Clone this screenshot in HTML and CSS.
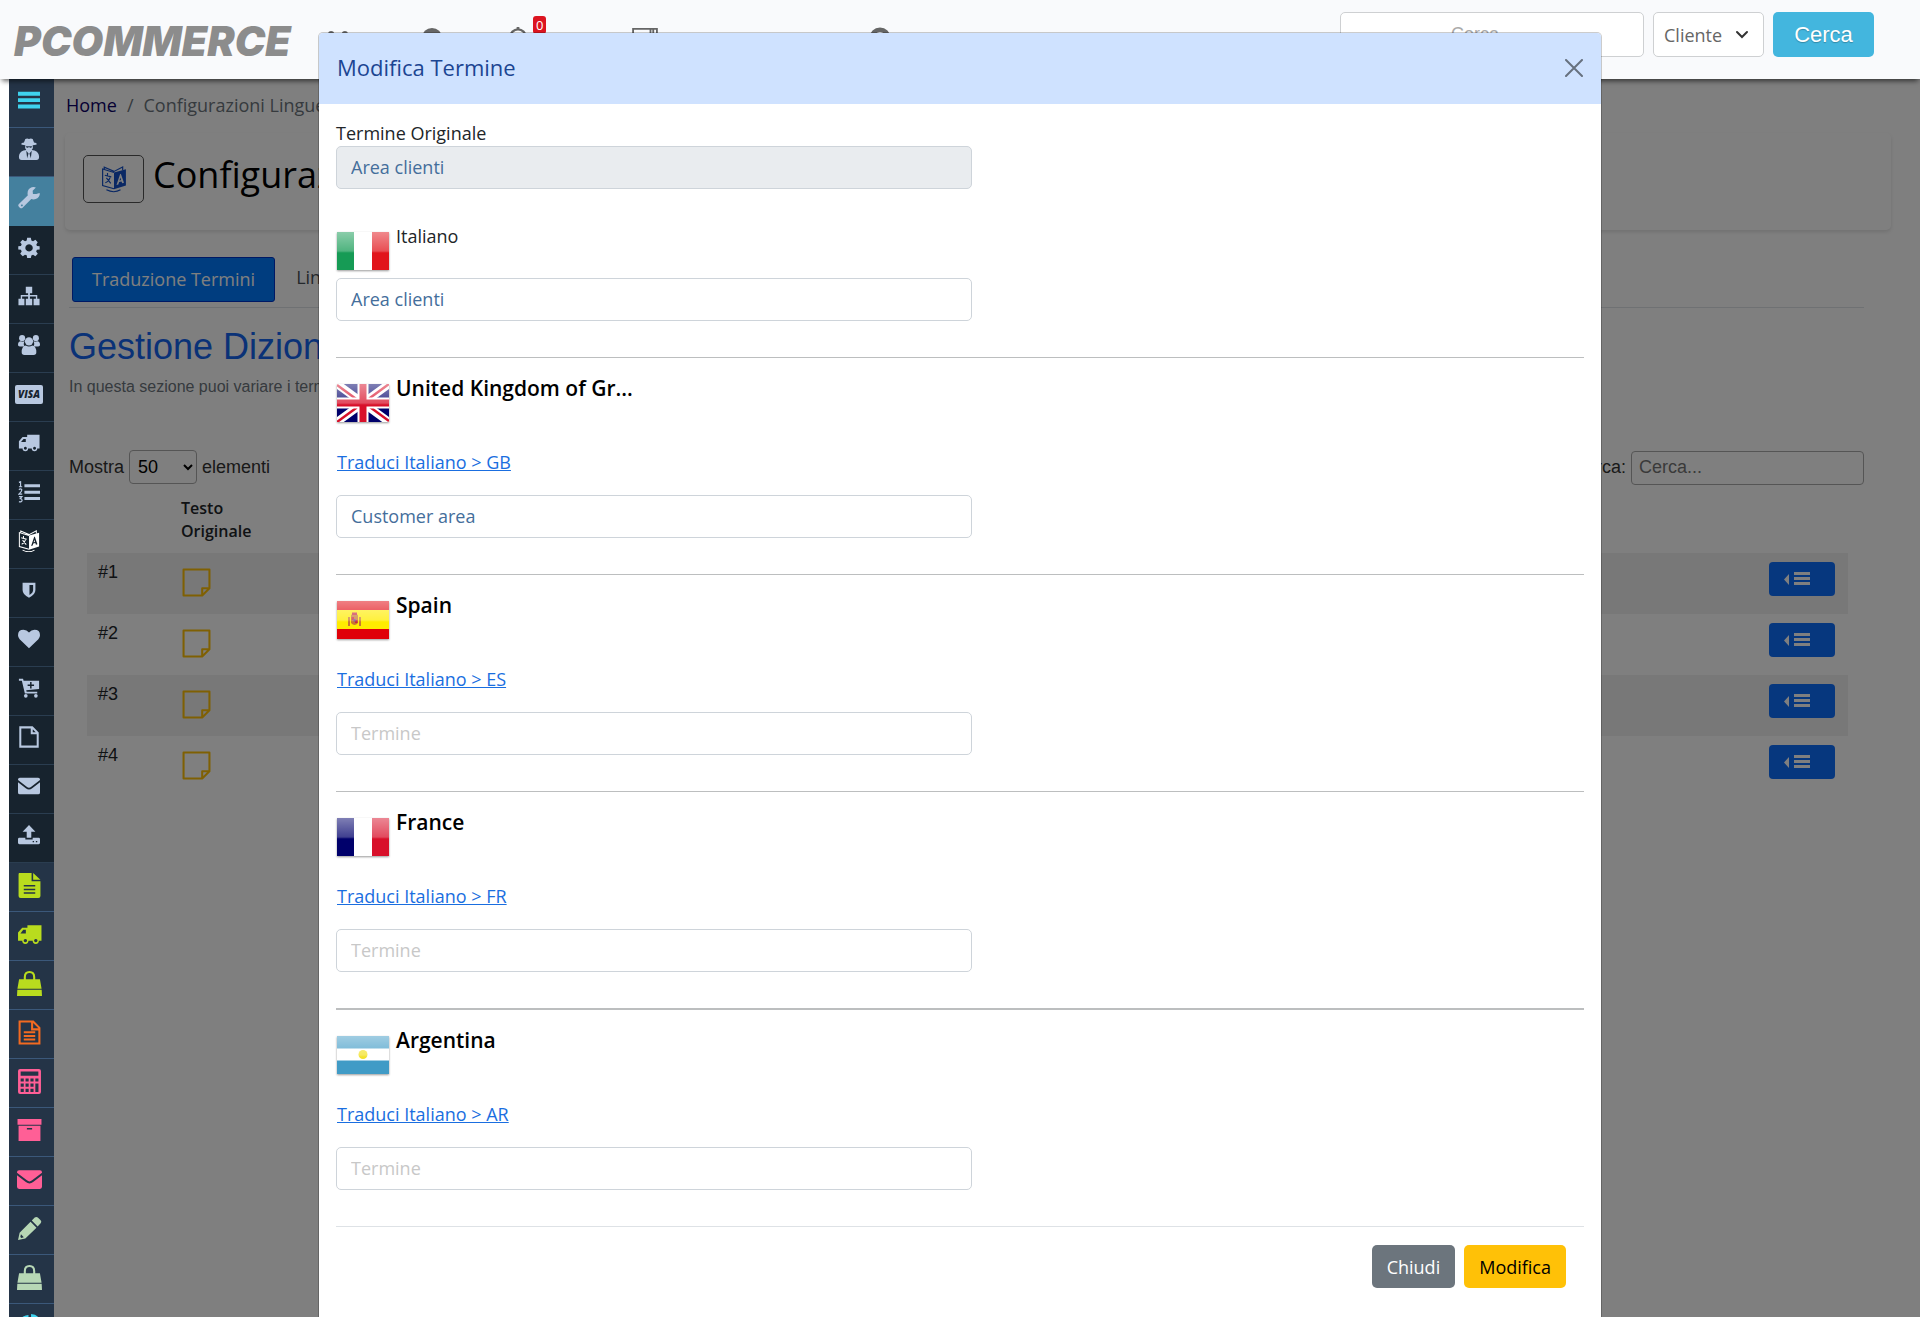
FILE: index.html
```html
<!DOCTYPE html>
<html lang="it">
<head>
  <meta charset="UTF-8">
  <meta name="viewport" content="width=device-width, initial-scale=1.0">
  <title>Configurazioni Lingue</title>
  <link rel="stylesheet" href="styles.css">
</head>
<body>

<svg class="sprite" aria-hidden="true">
  <symbol id="i-bars" viewBox="0 0 24 24"><path d="M0 3h24v4.300H0zM0 10h24v4.300H0zM0 17h24v4.300H0z"/></symbol>
  <symbol id="i-spy" viewBox="0 0 24 24"><path d="M8 1q2-1 4 0 2-1 4 0l1.500 4q3 .5 3 1.500T16 8q1 3-1 5l3 .5q5 2 5 7 0 3.500-3 3.500H4q-3 0-3-3.500 0-5 5-7l3-.5Q7 11 8 8q-4.500-.5-4.500-1.500t3-1.500zM8.500 9l1 1.500h1.500l1-1 1 1h1.500l1-1.500zM9 14l1 8 1.500-5zM15 14l-1 8-1.500-5z" fill-rule="evenodd"/></symbol>
  <symbol id="i-wrench" viewBox="0 0 24 24"><path d="M23.500 6.500q.5 1 0 2.500-1.500 4.500-6.500 4.500-1.500 0-2.500-.5L5 22.500q-1.500 1.500-3 0L1 21.500q-1.500-1.500 0-3L10.800 9q-.4-1-.4-2 0-5 4.600-6.600 2.500-.8 4.500.2L16 4l.3 3.500 3.600.2zM4.200 19a1 1 0 1 0 .1 0z" fill-rule="evenodd"/></symbol>
  <symbol id="i-gear" viewBox="0 0 24 24"><path d="M10 2h4l.6 3 1.800.8L19 4l2.500 2.800L20 9.200l.6 1.800 3 .3v3.400l-3 .4-.8 1.800 1.800 2.500-2.700 2.700-2.500-1.700-1.800.8-.6 2.800h-4l-.5-2.900-1.900-.7-2.400 1.700-2.800-2.700L4 16.900l-.8-1.800-2.900-.4v-3.400l2.900-.3L4 9.100 2.400 6.800 5 4l2.700 1.800L9.500 5zM12 9a4 4 0 1 0 .1 0z" fill-rule="evenodd"/></symbol>
  <symbol id="i-tree" viewBox="0 0 24 24"><path d="M8.500 2h7v7H13v2h8v4h2.500v7H17v-7h2.500v-2.500H13V15h2.500v7h-7v-7H11v-2.500H4.500V15H7v7H.5v-7H3v-4h8V9H8.500z"/></symbol>
  <symbol id="i-users" viewBox="0 0 24 24"><circle cx="4.500" cy="4.500" r="3.300"/><circle cx="19.500" cy="4.500" r="3.300"/><path d="M0 12q0-4 3-4 2 1 4 0-1.500 3 0 5.500H2Q0 13.500 0 12zM24 12q0-4-3-4-2 1-4 0 1.500 3 0 5.500h5q2 0 2-1.500z"/><circle cx="12" cy="8" r="4.500"/><path d="M4 20q0-7 4.500-7.500 3.500 2 7 0Q20 13 20 20q0 3-3 3H7q-3 0-3-3z"/></symbol>
  <symbol id="i-truck" viewBox="0 0 24 24"><path d="M10 3h13.500v15H21a3 3 0 0 1-6 0h-4a3 3 0 0 1-6 0H1v-8l4-4.500h5zM8.500 7.500H6L3.300 11h5.200zM8 16.200a1.600 1.600 0 1 0 .1 0zM18 16.200a1.600 1.600 0 1 0 .1 0z" fill-rule="evenodd"/></symbol>
  <symbol id="i-list" viewBox="0 0 24 24"><path d="M7 3.500h17v3.300H7zM7 10.500h17v3.300H7zM7 17.500h17v3.300H7z"/><path d="M1 1.500 2.800.8V6M1 6.300h3.600M1 9.500q1.500-1.500 3-.3.800 1.800-3 5.100h3.600M1 17h3.300L2.500 19.200q2 .2 2 1.800-.3 2.300-3.500 1.500" fill="none" stroke="currentColor" stroke-width="1.300"/></symbol>
  <symbol id="i-lang" viewBox="0 0 24 24"><path d="M12 6 23 3v15l-11 3.500zM17.600 7.500l-3.300 10 1.700-.5.700-2.200 2.200-.6.700 1.800 1.600-.5-2.900-8.400zM17.800 10.500l.8 2.500-1.500.4z" fill-rule="evenodd"/><path d="M12 6 1.500 2.800V18L12 21M3 3V1l9 4 8-4v3M5 22q7 3.500 13 0M3.500 8.500l6 1.500M6 6.500v2.500M8.500 10q-1 4-4.500 5.500M5 11l4 5" fill="none" stroke="currentColor" stroke-width="1.100"/></symbol>
  <symbol id="i-shield" viewBox="0 0 24 24"><path d="M5 4h14v8q0 5-7 8.500Q5 17 5 12zM12.500 6.500v11q4-2.500 4-5.500V6.500z" fill-rule="evenodd"/></symbol>
  <symbol id="i-heart" viewBox="0 0 24 24"><path d="M12 22 1.800 12.200Q0 10 0 7.800 0 2 6 2q3.500 0 6 3 2.500-3 6-3 6 0 6 5.800 0 2.200-1.800 4.400z"/></symbol>
  <symbol id="i-cart" viewBox="0 0 24 24"><path d="M1 2h4.500l.6 2H23v9L9 14.500l.4 1.500H21v2H7.500L4.200 4H1zM13.200 5.500v2.700H10.500v1.600h2.700v2.700h1.600V9.800h2.700V8.200h-2.700V5.500z" fill-rule="evenodd"/><circle cx="8.500" cy="20.500" r="2"/><circle cx="19.500" cy="20.500" r="2"/></symbol>
  <symbol id="i-file" viewBox="0 0 24 24"><path d="M2.500 1.500h13l6 6v15h-19zM15 1.500V8h6.500" fill="none" stroke="currentColor" stroke-width="2.200"/></symbol>
  <symbol id="i-mail" viewBox="0 0 24 24"><path d="M2 3h20q2 0 2 2v.5L14.500 12.800Q12 15 9.500 12.800L0 5.500V5q0-2 2-2zM0 8l8.500 6.500q3.500 2.700 7 0L24 8v11q0 2-2 2H2q-2 0-2-2z"/></symbol>
  <symbol id="i-upload" viewBox="0 0 24 24"><path d="M12 1l7 7.500h-4.500V15h-5V8.500H5zM1.500 15H8v2h8v-2h6.500q1.500 0 1.500 1.500v4q0 1.500-1.500 1.500h-21Q0 22 0 20.500v-4Q0 15 1.500 15zM16 18.500V20h1.500v-1.500zM19.500 18.500V20H21v-1.500z" fill-rule="evenodd"/></symbol>
  <symbol id="i-filetext" viewBox="0 0 24 24"><path d="M2 0h12v8h8.500v14q0 2-2 2h-17q-2 0-2-2V2q0-2 .5-2zM15.500 0l7 6.500h-7zM6.500 11.500V13h11v-1.500zM6.500 15v1.500h11V15zM6.500 18.500V20h11v-1.500z" fill-rule="evenodd"/></symbol>
  <symbol id="i-fileline" viewBox="0 0 24 24"><path d="M2.500 1.500h13l6 6v15h-19zM14.500 1.500V9h7M6.500 11.800h11M6.500 15.300h11M6.500 18.800h11" fill="none" stroke="currentColor" stroke-width="2"/></symbol>
  <symbol id="i-bag" viewBox="0 0 24 24"><path d="M2 8h20l1.600 9H.4zM.3 18h23.400l.3 6H0z"/><path d="M7.500 11V6q0-5 4.500-5t4.500 5v5" fill="none" stroke="currentColor" stroke-width="2"/></symbol>
  <symbol id="i-calc" viewBox="0 0 24 24"><path d="M3 0h18q2 0 2 2v20q0 2-2 2H3q-2 0-2-2V2q0-2 2-2zM3.500 2.500v4h17v-4zM3.500 9v3h3V9zM8.200 9v3h3V9zM12.900 9v3h3V9zM17.600 9v3h3V9zM3.500 14v3h3v-3zM8.200 14v3h3v-3zM12.900 14v3h3v-3zM17.600 14v8h3v-8zM3.500 19v3h3v-3zM8.200 19v3h3v-3zM12.900 19v3h3v-3z" fill-rule="evenodd"/></symbol>
  <symbol id="i-box" viewBox="0 0 24 24"><path d="M.5 1h23v5.500H.5zM1.500 7.500h21V22h-21zM9.500 9.500V11h5V9.500z" fill-rule="evenodd"/></symbol>
  <symbol id="i-pencil" viewBox="0 0 24 24"><path d="M1 23l1.500-7L13 5.500l5.700 5.700L8 21.700zM14.200 4.300 17 1.500q1.500-1.300 3 0L22.700 4q1.300 1.500 0 3l-2.900 3zM3.800 17.500l-.6 2.700 1 .9 2.300-.6z" fill-rule="evenodd"/></symbol>
  <symbol id="i-pie" viewBox="0 0 24 24"><path d="M11 1v11l8 8A11 11 0 1 1 11 1zM13.500 0A11 11 0 0 1 24 10.500H13.500z"/></symbol>
  <symbol id="i-note" viewBox="0 0 28 28"><path d="M1.500 1.500h25v18l-7 7h-18zM19.500 26.500v-7h7" fill="none" stroke="currentColor" stroke-width="2" stroke-linejoin="round"/></symbol>
  <symbol id="i-menuleft" viewBox="0 0 28 16"><path d="M6 3v11L1 8.500zM11 1h16v3H11zM11 6h16v3H11zM11 11h16v3H11z"/></symbol>
  <symbol id="i-x" viewBox="0 0 18 18"><path d="M1 1l16 16M17 1 1 17" fill="none" stroke="currentColor" stroke-width="2" stroke-linecap="round"/></symbol>
  <symbol id="i-globe" viewBox="0 0 24 24"><circle cx="12" cy="12" r="11"/></symbol>
  <symbol id="i-clock" viewBox="0 0 24 24"><circle cx="12" cy="11" r="8.500" fill="none" stroke="currentColor" stroke-width="2.500"/><path d="M10.500 0h3v3h-3z"/></symbol>
  <symbol id="i-news" viewBox="0 0 28 24"><path d="M1 2h26v20H1zM20 2v20M23 2v20M1 8h18" fill="none" stroke="currentColor" stroke-width="2"/></symbol>
  <symbol id="i-help" viewBox="0 0 24 24"><circle cx="12" cy="12" r="9" fill="none" stroke="currentColor" stroke-width="5"/></symbol>
  <linearGradient id="gloss" x1="0" y1="0" x2="0" y2="1">
    <stop offset="0" stop-color="#fff" stop-opacity=".5"/>
    <stop offset=".5" stop-color="#fff" stop-opacity=".25"/>
    <stop offset=".55" stop-color="#fff" stop-opacity="0"/>
  </linearGradient>
</svg>

<header class="topbar">
  <a class="logo" href="#">PCOMMERCE</a>
  <nav class="topnav" aria-label="Menu principale">
    <a href="#" aria-label="Clienti" class="clients"><svg class="nav-icon"><use href="#i-users"/></svg></a>
    <a href="#" aria-label="Sito"><svg class="nav-icon"><use href="#i-globe"/></svg></a>
    <a href="#" aria-label="Notifiche"><svg class="nav-icon"><use href="#i-clock"/></svg><span class="badge">0</span></a>
    <a href="#" aria-label="Novità" class="news"><svg class="nav-icon nav-icon-wide"><use href="#i-news"/></svg></a>
    <a href="#" aria-label="Aiuto" class="help"><svg class="nav-icon"><use href="#i-help"/></svg></a>
  </nav>
  <form class="top-search">
    <input type="text" class="top-input" placeholder="Cerca..." aria-label="Cerca">
    <select class="top-select" aria-label="Tipo di ricerca">
      <option>Cliente</option>
    </select>
    <button type="button" class="top-btn">Cerca</button>
  </form>
</header>

<div class="layout">
  <nav class="sidebar" aria-label="Menu laterale">
    <a href="#" class="side-link cyan" aria-label="Menu"><svg><use href="#i-bars"/></svg></a>
    <a href="#" class="side-link" aria-label="Agente"><svg><use href="#i-spy"/></svg></a>
    <a href="#" class="side-link active" aria-label="Configurazione"><svg><use href="#i-wrench"/></svg></a>
    <a href="#" class="side-link sub" aria-label="Impostazioni"><svg><use href="#i-gear"/></svg></a>
    <a href="#" class="side-link sub" aria-label="Categorie"><svg><use href="#i-tree"/></svg></a>
    <a href="#" class="side-link sub" aria-label="Utenti"><svg><use href="#i-users"/></svg></a>
    <a href="#" class="side-link sub" aria-label="Pagamenti"><span class="visa">VISA</span></a>
    <a href="#" class="side-link sub" aria-label="Spedizioni"><svg><use href="#i-truck"/></svg></a>
    <a href="#" class="side-link sub" aria-label="Numerazione"><svg><use href="#i-list"/></svg></a>
    <a href="#" class="side-link sub white" aria-label="Lingue"><svg><use href="#i-lang"/></svg></a>
    <a href="#" class="side-link sub" aria-label="Sicurezza"><svg><use href="#i-shield"/></svg></a>
    <a href="#" class="side-link sub" aria-label="Preferiti"><svg><use href="#i-heart"/></svg></a>
    <a href="#" class="side-link sub" aria-label="Carrello"><svg><use href="#i-cart"/></svg></a>
    <a href="#" class="side-link sub" aria-label="Pagine"><svg><use href="#i-file"/></svg></a>
    <a href="#" class="side-link sub" aria-label="Email"><svg><use href="#i-mail"/></svg></a>
    <a href="#" class="side-link sub" aria-label="Carica"><svg><use href="#i-upload"/></svg></a>
    <a href="#" class="side-link big lime" aria-label="Ordini"><svg><use href="#i-filetext"/></svg></a>
    <a href="#" class="side-link big lime" aria-label="Consegne"><svg><use href="#i-truck"/></svg></a>
    <a href="#" class="side-link big lime" aria-label="Vendite"><svg><use href="#i-bag"/></svg></a>
    <a href="#" class="side-link big orange" aria-label="Documenti"><svg><use href="#i-fileline"/></svg></a>
    <a href="#" class="side-link big pink" aria-label="Calcolatrice"><svg><use href="#i-calc"/></svg></a>
    <a href="#" class="side-link big pink" aria-label="Archivio"><svg><use href="#i-box"/></svg></a>
    <a href="#" class="side-link big pink" aria-label="Messaggi"><svg><use href="#i-mail"/></svg></a>
    <a href="#" class="side-link big sage" aria-label="Modifica"><svg><use href="#i-pencil"/></svg></a>
    <a href="#" class="side-link big sage" aria-label="Prodotti"><svg><use href="#i-bag"/></svg></a>
    <a href="#" class="side-link big cyan" aria-label="Statistiche"><svg><use href="#i-pie"/></svg></a>
  </nav>

  <main class="main">
    <nav class="breadcrumb" aria-label="breadcrumb">
      <a href="#">Home</a><span>/</span><span>Configurazioni Lingue</span>
    </nav>

    <div class="page-title">
      <span class="title-icon"><svg><use href="#i-lang"/></svg></span>
      <h1>Configurazioni Lingue</h1>
    </div>

    <div class="content">
      <div class="tabs">
        <a href="#" class="tab tab-active">Traduzione Termini</a>
        <a href="#" class="tab">Lingue</a>
      </div>

      <h2>Gestione Dizionario</h2>
      <p class="intro">In questa sezione puoi variare i termini</p>

      <div class="table-tools">
        <label>Mostra
          <select class="length-select">
            <option>50</option>
          </select>
          elementi</label>
        <label>Cerca:
          <input type="search" class="filter-input" placeholder="Cerca..."></label>
      </div>

      <table class="terms">
        <thead>
          <tr><th class="col-id"></th><th class="col-text">Testo Originale</th><th></th></tr>
        </thead>
        <tbody>
          <tr>
            <td>#1</td>
            <td><svg class="note"><use href="#i-note"/></svg></td>
            <td class="col-action"><button type="button" class="row-btn" aria-label="Azioni #1"><svg><use href="#i-menuleft"/></svg></button></td>
          </tr>
          <tr>
            <td>#2</td>
            <td><svg class="note"><use href="#i-note"/></svg></td>
            <td class="col-action"><button type="button" class="row-btn" aria-label="Azioni #2"><svg><use href="#i-menuleft"/></svg></button></td>
          </tr>
          <tr>
            <td>#3</td>
            <td><svg class="note"><use href="#i-note"/></svg></td>
            <td class="col-action"><button type="button" class="row-btn" aria-label="Azioni #3"><svg><use href="#i-menuleft"/></svg></button></td>
          </tr>
          <tr>
            <td>#4</td>
            <td><svg class="note"><use href="#i-note"/></svg></td>
            <td class="col-action"><button type="button" class="row-btn" aria-label="Azioni #4"><svg><use href="#i-menuleft"/></svg></button></td>
          </tr>
        </tbody>
      </table>
    </div>
    <div class="backdrop"></div>
  </main>
</div>

<div class="modal" role="dialog" aria-modal="true" aria-labelledby="modalTitle">
  <div class="modal-header">
    <h5 id="modalTitle">Modifica Termine</h5>
    <button type="button" class="btn-close" aria-label="Chiudi finestra"><svg><use href="#i-x"/></svg></button>
  </div>
  <form class="modal-body">
    <label class="original-label" for="originale">Termine Originale</label>
    <input type="text" id="originale" class="field" value="Area clienti" disabled>

    <div class="lang lang-first">
      <div class="lang-head">
        <svg class="flag" viewBox="0 0 52 38"><path fill="#fff" d="M0 0h52v38H0z"/><path fill="#169b55" d="M0 0h17v38H0z"/><path fill="#e1141b" d="M35 0h17v38H35z"/><path fill="url(#gloss)" d="M0 0h52v38H0z"/></svg>
        <label for="it">Italiano</label>
      </div>
      <input type="text" id="it" class="field" value="Area clienti">
    </div>

    <div class="lang">
      <div class="lang-head">
        <svg class="flag" viewBox="0 0 52 38"><path fill="#00006b" d="M0 0h52v38H0z"/><path stroke="#fff" stroke-width="8" d="M0 0l52 38M52 0 0 38"/><path stroke="#d8102a" stroke-width="2.500" d="M0 1l26 19M52 0 26 19M52 37 26 18M0 38l26-19"/><path stroke="#fff" stroke-width="11" d="M26 0v38M0 19h52"/><path stroke="#d8102a" stroke-width="7" d="M26 0v38M0 19h52"/><path fill="url(#gloss)" d="M0 0h52v38H0z"/></svg>
        <label for="gb">United Kingdom of Gr...</label>
      </div>
      <a href="#" class="translate">Traduci Italiano &gt; GB</a>
      <input type="text" id="gb" class="field" placeholder="Termine" value="Customer area">
    </div>

    <div class="lang">
      <div class="lang-head">
        <svg class="flag" viewBox="0 0 52 38"><path fill="#e00008" d="M0 0h52v38H0z"/><path fill="#ffec00" d="M0 9h52v19H0z"/><path fill="#c87832" d="M11 16h2v9h-2zM22 16h2v9h-2zM14 14q3.500-3 7 0v8q-3.500 4-7 0z"/><path fill="#c8283c" d="M14.500 16H17v3h-2.500zM18 19h2.500v3H18zM15 11.500h5V14h-5z"/><path fill="#7d5096" d="M16.500 18h2v2.500h-2z"/><path fill="url(#gloss)" d="M0 0h52v38H0z"/></svg>
        <label for="es">Spain</label>
      </div>
      <a href="#" class="translate">Traduci Italiano &gt; ES</a>
      <input type="text" id="es" class="field" placeholder="Termine">
    </div>

    <div class="lang">
      <div class="lang-head">
        <svg class="flag" viewBox="0 0 52 38"><path fill="#fff" d="M0 0h52v38H0z"/><path fill="#00006b" d="M0 0h17v38H0z"/><path fill="#d8102a" d="M35 0h17v38H35z"/><path fill="url(#gloss)" d="M0 0h52v38H0z"/></svg>
        <label for="fr">France</label>
      </div>
      <a href="#" class="translate">Traduci Italiano &gt; FR</a>
      <input type="text" id="fr" class="field" placeholder="Termine">
    </div>

    <div class="lang lang-last">
      <div class="lang-head">
        <svg class="flag" viewBox="0 0 52 38"><path fill="#409bc6" d="M0 0h52v38H0z"/><path fill="#fff" d="M0 12.500h52v12H0z"/><circle cx="26" cy="18.500" r="4.500" fill="#f3e22c"/><path fill="url(#gloss)" d="M0 0h52v38H0z"/></svg>
        <label for="ar">Argentina</label>
      </div>
      <a href="#" class="translate">Traduci Italiano &gt; AR</a>
      <input type="text" id="ar" class="field" placeholder="Termine">
    </div>

    <div class="modal-footer">
      <button type="button" class="btn btn-secondary">Chiudi</button>
      <button type="button" class="btn btn-warning">Modifica</button>
    </div>
  </form>
</div>

</body>
</html>
```

FILE: styles.css
```css
* {
  box-sizing: border-box;
}

html, body {
  height: 100%;
  overflow: hidden;
}

body {
  margin: 0;
  background-color: #fff;
  color: #212529;
  font-family: "Open Sans", sans-serif;
  font-size: 18px;
  line-height: 27px;
  position: relative;
}

h1, h2, h5, p {
  margin: 0;
  font-weight: 400;
}

a {
  text-decoration: none;
}

button, input, select {
  font-family: inherit;
  font-size: inherit;
}

svg {
  fill: currentColor;
}

.sprite {
  position: absolute;
  width: 0;
  height: 0;
}

/* top bar */
.topbar {
  position: relative;
  z-index: 3;
  display: flex;
  align-items: flex-start;
  height: 79px;
  padding: 12px 46px 0 14px;
  background-color: #f9fafc;
  box-shadow: 0 4px 5px -2px rgba(0, 0, 0, .6);
}

.logo {
  width: 284px;
  padding-top: 8px;
  color: #8c8c8c;
  font-family: Inter, sans-serif;
  font-size: 41px;
  font-weight: 900;
  font-style: italic;
  line-height: 42px;
}

.topnav {
  display: flex;
  flex: 1;
  gap: 64px;
  padding: 15px 0 0 29px;
}

.topnav a {
  position: relative;
  color: #666;
}

.topnav .clients {
  padding-top: 3px;
  margin-right: 8px;
}

.topnav .news {
  margin-left: 38px;
}

.topnav .help {
  margin-left: 146px;
}

.nav-icon {
  display: block;
  width: 22px;
  height: 22px;
}

.nav-icon-wide {
  width: 28px;
}

.badge {
  position: absolute;
  top: -11px;
  left: 26px;
  padding: 0 3px;
  border-radius: 3px;
  background-color: #dc1420;
  color: #fff;
  font-size: 13px;
  line-height: 18px;
}

.top-search {
  display: flex;
  gap: 9px;
}

.top-input, .top-select {
  height: 45px;
  border: 1px solid #ced0d2;
  border-radius: 5px;
  background-color: #fff;
}

.top-input {
  width: 304px;
  padding: 0 20px 0 110px;
  font-family: "Liberation Sans", sans-serif;
}

.top-input::placeholder {
  color: #aaa;
}

.top-select {
  width: 111px;
  padding: 0 10px;
  appearance: none;
  background-image: url("data:image/svg+xml,%3Csvg xmlns='http://www.w3.org/2000/svg' viewBox='0 0 14 14'%3E%3Cpath d='M2 4l5 5 5-5' fill='none' stroke='%23333' stroke-width='2' stroke-linecap='round'/%3E%3C/svg%3E");
  background-position: right 14px center;
  background-repeat: no-repeat;
  background-size: 14px 14px;
  color: #666;
}

.top-btn {
  width: 101px;
  height: 45px;
  border: 0;
  border-radius: 5px;
  background-color: #43b6de;
  color: #fff;
  font-family: "Liberation Sans", sans-serif;
  font-size: 22px;
  text-shadow: 0 1px 1px rgba(0, 0, 0, .25);
}

/* side menu */
.layout {
  display: flex;
  padding-left: 9px;
}

.sidebar {
  width: 45px;
  flex-shrink: 0;
  background-color: #243447;
}

.side-link {
  display: flex;
  align-items: center;
  justify-content: center;
  height: 49px;
  padding: 0 5px 6px 0;
  border-bottom: 1px solid #3b587a;
  color: #b8c8e0;
}

.side-link svg {
  width: 22px;
  height: 22px;
}

.side-link.big {
  padding-bottom: 3px;
}

.side-link.big svg {
  width: 25px;
  height: 25px;
}

.visa {
  width: 28px;
  border-radius: 2px;
  background-color: #b8c8e0;
  color: #17232e;
  font-size: 10px;
  font-weight: 800;
  font-style: italic;
  line-height: 19px;
  text-align: center;
}

.side-link.sub {
  border-color: #2a3d50;
  background-color: #17232e;
}

.side-link.active {
  border-color: #44809e;
  background-color: #44809e;
}

.side-link.cyan { color: #3fd2ee; }
.side-link.white { color: #fff; }
.side-link.lime { color: #b9dc1e; }
.side-link.orange { color: #f26a21; }
.side-link.pink { color: #ff5f96; }
.side-link.sage { color: #b7d7b5; }

/* page */
.main {
  position: relative;
  flex: 1;
  padding: 13px 29px 0 11px;
}

.backdrop {
  position: absolute;
  inset: 0;
  background-color: rgba(0, 0, 0, .5);
}

.breadcrumb {
  display: flex;
  gap: 10px;
  padding-left: 1px;
  color: #6c757d;
}

.breadcrumb a {
  color: #0b0066;
}

.page-title {
  display: flex;
  align-items: flex-start;
  gap: 9px;
  height: 97px;
  margin-top: 14px;
  padding: 22px 18px;
  border-radius: 5px;
  box-shadow: 0 2px 4px rgba(0, 0, 0, .12);
}

.title-icon {
  display: flex;
  align-items: center;
  justify-content: center;
  width: 61px;
  height: 48px;
  border: 1px solid #555;
  border-radius: 5px;
  color: #1450c8;
}

.title-icon svg {
  width: 26px;
  height: 28px;
}

h1 {
  color: #000;
  font-size: 36px;
  line-height: 40px;
}

.content {
  padding: 27px 27px 0 4px;
}

.tabs {
  display: flex;
  height: 51px;
  padding-left: 3px;
  border-bottom: 1px solid #dee2e6;
}

.tab {
  height: 45px;
  padding: 6px 20px;
  border: 1px solid transparent;
  border-radius: 3px;
  color: #495057;
}

.tab-active {
  padding: 8px 19px;
  border-color: #0032c8;
  background-color: #007bff;
  color: #fff;
}

h2 {
  margin-top: 18px;
  color: #1464ee;
  font-family: "Liberation Sans", sans-serif;
  font-size: 36px;
  line-height: 42px;
}

.intro {
  margin-top: 7px;
  color: #6c757d;
  font-family: "Liberation Sans", sans-serif;
  font-size: 16px;
  line-height: 24px;
}

.table-tools {
  display: flex;
  justify-content: space-between;
  margin-top: 51px;
  color: #333;
  font-family: "Liberation Sans", sans-serif;
  font-size: 18px;
  line-height: 34px;
}

.length-select, .filter-input {
  height: 34px;
  border: 1px solid #aaa;
  border-radius: 4px;
  background-color: transparent;
}

.length-select {
  width: 68px;
  padding: 0 4px;
}

.filter-input {
  width: 233px;
  padding: 0 7px;
}

.terms {
  width: calc(100% - 34px);
  margin: 11px 16px 0 18px;
  border-collapse: collapse;
}

.terms th {
  padding: 1px 10px 10px;
  color: #212529;
  font-size: 16px;
  font-weight: 600;
  line-height: 23px;
  text-align: left;
}

.terms td {
  height: 61px;
  padding: 9px 11px;
  font-family: "Liberation Sans", sans-serif;
  font-size: 18px;
  line-height: 20px;
  vertical-align: top;
}

.terms tbody tr:nth-child(odd) {
  background-color: #f0f0f0;
}

.col-id {
  width: 84px;
}

.col-text {
  width: 110px;
}

.terms .col-action {
  padding-right: 13px;
  text-align: right;
}

.note {
  display: block;
  width: 29px;
  height: 29px;
  margin-top: 6px;
  color: #ffc107;
}

.row-btn {
  width: 66px;
  height: 34px;
  padding: 0 14px;
  border: 0;
  border-radius: 4px;
  background-color: #0d6efd;
  color: #fff;
  text-align: left;
}

.row-btn svg {
  display: block;
  width: 28px;
  height: 16px;
}

/* modal */
.modal {
  position: absolute;
  z-index: 5;
  top: 32px;
  left: 0;
  right: 0;
  width: 1284px;
  max-width: 100%;
  min-height: 100%;
  margin: 0 auto;
  border: 1px solid rgba(0, 0, 0, .2);
  border-radius: 5px;
  background-color: #fff;
  background-clip: padding-box;
}

.modal-header {
  display: flex;
  align-items: center;
  justify-content: space-between;
  height: 71px;
  padding: 0 18px 2px;
  border-radius: 4px 4px 0 0;
  background-color: #cfe2ff;
}

.modal-header h5 {
  color: #1c4592;
  font-size: 22px;
}

.btn-close {
  padding: 0;
  border: 0;
  background: none;
  color: #67717f;
}

.btn-close svg {
  display: block;
  width: 18px;
  height: 18px;
}

.modal-body {
  padding: 17px;
}

.original-label {
  display: block;
  line-height: 25px;
}

.field {
  display: block;
  width: 51%;
  height: 43px;
  padding: 0 14px 1px;
  border: 1px solid #ced4da;
  border-radius: 5px;
  background-color: #fff;
  color: #446e9b;
}

.field:disabled {
  background-color: #e9ecef;
}

.field::placeholder {
  color: #c8c8c8;
}

.lang {
  height: 217px;
  padding-top: 26px;
  border-top: 1px solid #bcbebf;
}

.lang-first {
  height: 168px;
  padding-top: 43px;
  border-top: 0;
}

.lang-last {
  height: 218px;
  border-top-width: 2px;
}

.lang-head {
  display: flex;
  gap: 7px;
  height: 65px;
  padding-left: 1px;
  color: #000;
  font-size: 21px;
  font-weight: 600;
}

.lang-head label {
  margin-top: -9px;
}

.lang-first .lang-head {
  height: 46px;
  color: #212529;
  font-size: 18px;
  font-weight: 400;
}

.flag {
  width: 52px;
  height: 38px;
  box-shadow: 0 1px 2px rgba(0, 0, 0, .4);
}

.translate {
  display: inline-block;
  margin-bottom: 19px;
  padding-left: 1px;
  color: #1a6ee0;
  text-decoration: underline;
}

.modal-footer {
  display: flex;
  justify-content: flex-end;
  gap: 9px;
  padding: 18px;
  border-top: 1px solid #dee2e6;
}

.btn {
  height: 43px;
  padding: 0 14px;
  border: 1px solid transparent;
  border-radius: 5px;
}

.btn-secondary {
  background-color: #6c757d;
  color: #fff;
}

.btn-warning {
  background-color: #ffc107;
  color: #000;
}
```
